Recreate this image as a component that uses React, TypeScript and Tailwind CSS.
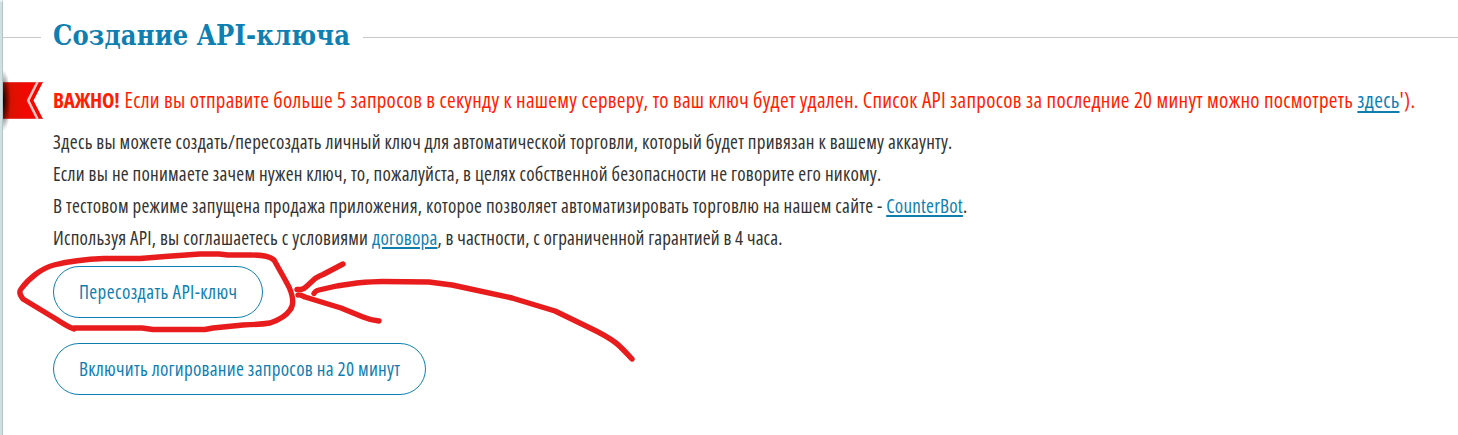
import type { ReactNode } from "react";

function Link({ children, solid = false }: { children: ReactNode; solid?: boolean }) {
  return (
    <a
      href="#"
      className={
        solid
          ? "text-[#0f7fb2] underline decoration-[1.5px] underline-offset-[3px] [text-decoration-skip-ink:none]"
          : "text-[#0f7fb2] underline decoration-[1.5px] underline-offset-2"
      }
    >
      {children}
    </a>
  );
}

function Ribbon() {
  return (
    <svg className="h-[61px] w-[40px] shrink-0 overflow-hidden" viewBox="0 0 40 61">
      <defs>
        <radialGradient id="shade" cx="0.5" cy="0.5" r="0.5">
          <stop offset="0" stopColor="#000" stopOpacity="0.9" />
          <stop offset="0.5" stopColor="#000" stopOpacity="0.45" />
          <stop offset="1" stopColor="#000" stopOpacity="0" />
        </radialGradient>
        <linearGradient id="cloth">
          <stop offset="0" stopColor="#cc1200" />
          <stop offset="0.3" stopColor="#e01000" />
          <stop offset="0.6" stopColor="#f30800" />
        </linearGradient>
      </defs>
      <path d="M0 12H40L30.500 30.500L40 49H0Z" fill="url(#cloth)" />
      <path d="M0 12.500H40M0 48.500H40" stroke="#e8403a" strokeWidth="1" />
      <path d="M34.500 12L25.200 30.500L34.500 49" fill="none" stroke="#ffc4c2" strokeWidth="2.600" />
      <ellipse cx="0" cy="30.5" rx="8" ry="31" fill="url(#shade)" />
    </svg>
  );
}

function Marker() {
  return (
    <svg
      className="pointer-events-none absolute top-0 left-0 h-[435px] w-[700px]"
      viewBox="0 0 700 435"
      fill="none"
      stroke="#e81c1c"
      strokeWidth="5.4"
      strokeLinecap="round"
      strokeLinejoin="round"
    >
      <path d="M74 329C68 327 62 323 56 319L23 299Q18 293 21 289C29 278 42 268 54 265C70 261 91 259 104 258.500L140 258.500L165 256.500L200 254L219 254L228 255H251Q269 255 274 260L283 276L289 287C293 296 294 305 290 310C286 316 279 320 270 323Q260 324.500 243 325L213 328L205 329.500H153L142 328H74" />
      <path d="M297 289.500H301Q304 289 307 286L314 279.500Q316 277.500 323 274.500L343 264" />
      <path d="M298 295Q300 294.500 305 297L341 308L363 317Q370 320 379 321" />
      <path d="M314 293.500Q315 291 319 290C334 286 348 284 357 283Q374 281.500 382 281.500L429 282L452 285L512 298L555 311L588 327Q607 336 616 343Q621 347 632 359" />
    </svg>
  );
}

export default function App() {
  return (
    <div className="relative flex h-[435px] w-[1458px] overflow-hidden bg-white font-['Open_Sans','Noto_Sans',sans-serif] text-[19px] tracking-[0.23px] text-[#333] font-stretch-[75%]">
      <div className="w-[3px] shrink-0 border-t-2 border-r border-t-[#e6f1f3] border-r-[#b4c5c7] bg-[#d0dfe2]" />
      <main className="flex min-w-0 flex-1 flex-col whitespace-nowrap">
        <header className="flex h-[75px] items-center">
          <div className="h-px w-[38px] shrink-0 bg-[#c8c8c8]" />
          <h1 className="w-[322px] shrink-0 pb-[4px] pl-3 font-['DejaVu_Serif',serif] text-[27px] leading-[40px] font-bold tracking-[0.15px] text-[#0f7fb2] font-stretch-condensed">
            Создание API-ключа
          </h1>
          <div className="h-px flex-1 bg-[#c8c8c8]" />
        </header>
        <div className="mt-[-5px] flex h-[61px] items-center">
          <Ribbon />
          <p className="pb-[2px] pl-[10px] text-[21px] leading-[30px] tracking-[0.28px] text-[#ff1f00]">
            <b className="mr-px font-bold tracking-[-0.2px]">ВАЖНО!</b>{" "}
            <span>Если вы отправите больше 5 запросов в секунду к нашему серверу, то ваш ключ будет удален. Список API запросов за последние 20 минут можно посмотреть </span>
            <Link solid>здесь</Link>').
          </p>
        </div>
        <div className="mt-[-5px] pl-[50px] leading-[32px]">
          <p>Здесь вы можете создать/пересоздать личный ключ для автоматической торговли, который будет привязан к вашему аккаунту.</p>
          <p>Если вы не понимаете зачем нужен ключ, то, пожалуйста, в целях собственной безопасности не говорите его никому.</p>
          <p>
            В тестовом режиме запущена продажа приложения, которое позволяет автоматизировать торговлю на нашем сайте - <Link>CounterBot</Link>.
          </p>
          <p>
            Используя API, вы соглашаетесь с условиями <Link>договора</Link>
            <span className="tracking-[0.15px]">, в частности, с ограниченной гарантией в 4 часа.</span>
          </p>
        </div>
        <div className="mt-[12px] flex flex-col items-start gap-[25px] pl-[50px] text-[#0f7fb2]">
          <button className="h-[52px] w-[210px] rounded-full border border-[#0f7fb2] pl-[25px] text-left tracking-[0.4px]">Пересоздать API-ключ</button>
          <button className="h-[52px] w-[373px] rounded-full border border-[#0f7fb2] pl-[25px] text-left tracking-[0.28px]">
            Включить логирование запросов на 20 минут
          </button>
        </div>
      </main>
      <Marker />
    </div>
  );
}
